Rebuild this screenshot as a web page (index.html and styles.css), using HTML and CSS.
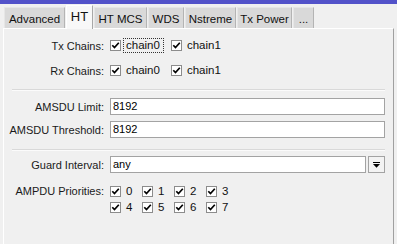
FILE: index.html
```html
<!DOCTYPE html>
<html>
<head>
<meta charset="utf-8">
<link rel="stylesheet" href="styles.css">
</head>
<body>
<div class="topbar"></div>
<div class="tabs">
  <div class="tab t-adv">Advanced</div>
  <div class="tab t-ht active">HT</div>
  <div class="tab t-mcs">HT MCS</div>
  <div class="tab t-wds">WDS</div>
  <div class="tab t-nst">Nstreme</div>
  <div class="tab t-txp">Tx Power</div>
  <div class="tab t-more">...</div>
</div>
<div class="panel">
  <div class="section s1">
    <div class="row">
      <div class="label">Tx Chains:</div>
      <div class="checks chains">
        <div class="chk"><span class="box"><svg viewBox="0 0 9 9" width="9" height="9"><path d="M1.3 4.2 L3.5 6.6 L7.8 1.8" fill="none" stroke="#000" stroke-width="1.7"/></svg></span><span class="txt focus">chain0</span></div>
        <div class="chk"><span class="box"><svg viewBox="0 0 9 9" width="9" height="9"><path d="M1.3 4.2 L3.5 6.6 L7.8 1.8" fill="none" stroke="#000" stroke-width="1.7"/></svg></span><span class="txt">chain1</span></div>
      </div>
    </div>
    <div class="row">
      <div class="label">Rx Chains:</div>
      <div class="checks chains">
        <div class="chk"><span class="box"><svg viewBox="0 0 9 9" width="9" height="9"><path d="M1.3 4.2 L3.5 6.6 L7.8 1.8" fill="none" stroke="#000" stroke-width="1.7"/></svg></span><span class="txt">chain0</span></div>
        <div class="chk"><span class="box"><svg viewBox="0 0 9 9" width="9" height="9"><path d="M1.3 4.2 L3.5 6.6 L7.8 1.8" fill="none" stroke="#000" stroke-width="1.7"/></svg></span><span class="txt">chain1</span></div>
      </div>
    </div>
  </div>
  <div class="sep"></div>
  <div class="section s2">
    <div class="row">
      <div class="label">AMSDU Limit:</div>
      <div class="input">8192</div>
    </div>
    <div class="row">
      <div class="label">AMSDU Threshold:</div>
      <div class="input">8192</div>
    </div>
  </div>
  <div class="sep"></div>
  <div class="section s3">
    <div class="row">
      <div class="label">Guard Interval:</div>
      <div class="select">
        <div class="input">any</div>
        <div class="btn"><svg viewBox="0 0 7 6" width="7" height="6"><rect x="0" y="0" width="7" height="1" fill="#000"/><polygon points="0,2 7,2 3.5,5.8" fill="#000"/></svg></div>
      </div>
    </div>
    <div class="row prio">
      <div class="label">AMPDU Priorities:</div>
      <div class="grid">
        <div class="chk"><span class="box"><svg viewBox="0 0 9 9" width="9" height="9"><path d="M1.3 4.2 L3.5 6.6 L7.8 1.8" fill="none" stroke="#000" stroke-width="1.7"/></svg></span><span class="num">0</span></div>
        <div class="chk"><span class="box"><svg viewBox="0 0 9 9" width="9" height="9"><path d="M1.3 4.2 L3.5 6.6 L7.8 1.8" fill="none" stroke="#000" stroke-width="1.7"/></svg></span><span class="num">1</span></div>
        <div class="chk"><span class="box"><svg viewBox="0 0 9 9" width="9" height="9"><path d="M1.3 4.2 L3.5 6.6 L7.8 1.8" fill="none" stroke="#000" stroke-width="1.7"/></svg></span><span class="num">2</span></div>
        <div class="chk"><span class="box"><svg viewBox="0 0 9 9" width="9" height="9"><path d="M1.3 4.2 L3.5 6.6 L7.8 1.8" fill="none" stroke="#000" stroke-width="1.7"/></svg></span><span class="num">3</span></div>
        <div class="chk"><span class="box"><svg viewBox="0 0 9 9" width="9" height="9"><path d="M1.3 4.2 L3.5 6.6 L7.8 1.8" fill="none" stroke="#000" stroke-width="1.7"/></svg></span><span class="num">4</span></div>
        <div class="chk"><span class="box"><svg viewBox="0 0 9 9" width="9" height="9"><path d="M1.3 4.2 L3.5 6.6 L7.8 1.8" fill="none" stroke="#000" stroke-width="1.7"/></svg></span><span class="num">5</span></div>
        <div class="chk"><span class="box"><svg viewBox="0 0 9 9" width="9" height="9"><path d="M1.3 4.2 L3.5 6.6 L7.8 1.8" fill="none" stroke="#000" stroke-width="1.7"/></svg></span><span class="num">6</span></div>
        <div class="chk"><span class="box"><svg viewBox="0 0 9 9" width="9" height="9"><path d="M1.3 4.2 L3.5 6.6 L7.8 1.8" fill="none" stroke="#000" stroke-width="1.7"/></svg></span><span class="num">7</span></div>
      </div>
    </div>
  </div>
</div>
</body>
</html>
```

FILE: styles.css
```css
html, body {
  margin: 0;
  padding: 0;
}
body {
  width: 397px;
  height: 244px;
  overflow: hidden;
  background: #f0f0f0;
  font-family: "Liberation Sans", Arial, sans-serif;
  font-size: 11px;
  color: #111;
}
.topbar {
  height: 4px;
  background: #5252c9;
}
.tabs {
  display: flex;
  align-items: flex-end;
  gap: 1px;
  height: 21px;
  margin-top: 3px;
  padding-left: 4px;
}
.tab {
  box-sizing: border-box;
  height: 21px;
  background: #d9d9d9;
  border-top: 1px solid #e6e6e6;
  border-left: 1px solid #e6e6e6;
  border-right: 1px solid #b4b4b4;
  display: flex;
  align-items: center;
  justify-content: center;
  font-size: 11.5px;
  padding-top: 2px;
}
.tab.active {
  height: 24px;
  margin-bottom: -1px;
  position: relative;
  z-index: 1;
  background: #f8f8f8;
  border-top: 1px solid #ffffff;
  border-left: 1px solid #ffffff;
  border-right: 1px solid #a8a8a8;
  font-size: 13px;
  padding-top: 0;
  padding-bottom: 2px;
}
.t-adv { width: 61px; }
.t-ht { width: 27px; }
.t-mcs { width: 53px; }
.t-wds { width: 36px; }
.t-nst { width: 51px; }
.t-txp { width: 55px; }
.t-more { width: 21px; }

.panel {
  box-sizing: border-box;
  margin-left: 3px;
  width: 391px;
  height: 220px;
  border-top: 1px solid #ffffff;
  border-left: 1px solid #ffffff;
  border-right: 1px solid #a0a0a0;
  background: #f0f0f0;
}
.section {
  display: flex;
  flex-direction: column;
}
.s1 {
  padding-top: 8px;
  gap: 8px;
  padding-bottom: 10px;
}
.s2 {
  padding-top: 7px;
  gap: 6px;
  padding-bottom: 11px;
}
.s3 {
  padding-top: 5px;
  gap: 10px;
}
.row {
  display: flex;
  align-items: center;
  min-height: 17px;
}
.prio {
  align-items: flex-start;
}
.prio .label {
  line-height: 16px;
}
.label {
  box-sizing: border-box;
  width: 100px;
  flex: none;
  text-align: right;
  margin-right: 6px;
  color: #1a1a1a;
}
.sep {
  height: 1px;
  background: #d9d9d9;
  border-bottom: 1px solid #fbfbfb;
  margin: 0 8px;
}
.input {
  box-sizing: border-box;
  width: 275px;
  height: 17px;
  background: #ffffff;
  border: 1px solid #a3a3a3;
  padding-left: 2px;
  line-height: 15px;
  color: #000;
}
.select {
  display: flex;
  gap: 2px;
}
.select .input {
  width: 256px;
}
.btn {
  box-sizing: border-box;
  width: 17px;
  height: 17px;
  border: 1px solid #a3a3a3;
  background: #f3f3f3;
  display: flex;
  align-items: center;
  justify-content: center;
}
.btn svg {
  display: block;
}
.checks {
  display: flex;
}
.chk {
  display: flex;
  align-items: center;
  height: 16px;
}
.box {
  box-sizing: border-box;
  width: 11px;
  height: 11px;
  border: 1px solid #8c8c8c;
  background: #ffffff;
  display: flex;
  align-items: center;
  justify-content: center;
  flex: none;
}
.box svg {
  display: block;
}
.chains .chk {
  margin-right: 7px;
}
.txt {
  margin-left: 2px;
  padding: 0 3px 0 2px;
  border: 1px dotted transparent;
  line-height: 13px;
  font-size: 11.5px;
}
.txt.focus {
  border-color: #333;
}
.grid {
  display: grid;
  grid-template-columns: repeat(4, 32px);
  grid-auto-rows: 16px;
}
.num {
  margin-left: 5px;
  font-size: 11.5px;
}
```
